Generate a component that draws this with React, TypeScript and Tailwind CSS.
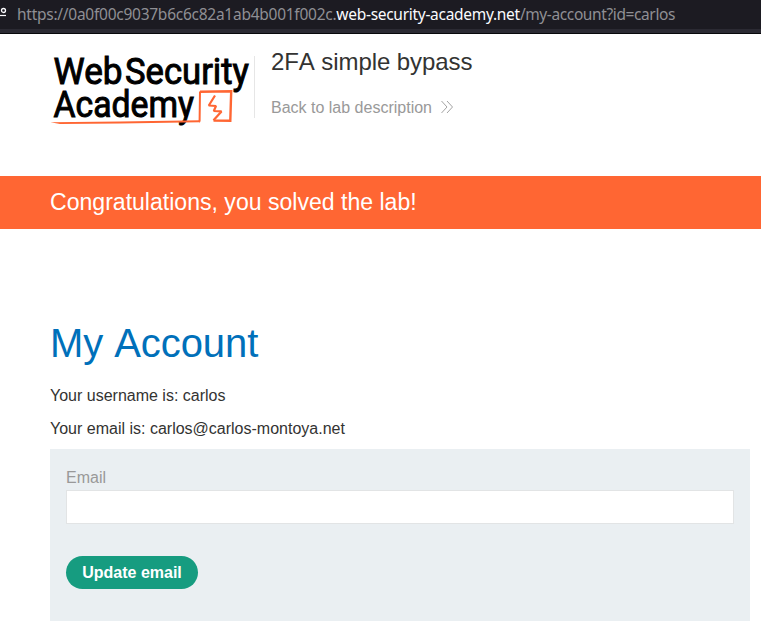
import React from "react";

function AddressBar() {
  return (
    <div className="flex h-[34px] flex-col bg-[#1c1b22]">
      <div className="flex h-[29px] items-start overflow-hidden">
        <svg className="h-[29px] w-[17px] shrink-0" viewBox="0 0 17 29" fill="none" stroke="#fbfbfe">
          <circle cx="3.5" cy="10.5" r="2" strokeWidth="1.3" />
          <path d="M0 15.5H6" strokeWidth="1.2" />
        </svg>
        <span className="whitespace-pre font-['Noto_Sans',sans-serif] text-[15.5px] leading-[28px] tracking-[-0.26px] text-[#8f8f94]">
          https://0a0f00c9037b6c6c82a1ab4b001f002c.<span className="tracking-[-0.29px] text-[#fbfbfe]">web-security-academy.net</span><span className="tracking-[-0.39px]">/my-account?id=carlos</span>
        </span>
      </div>
      <div className="h-1 bg-[#2b2a33]" />
      <div className="h-px bg-[#08080b]" />
    </div>
  );
}

function Logo() {
  return (
    <svg className="h-[80px] w-[204px] shrink-0 overflow-visible" viewBox="50 50 204 80" fill="none" role="img" aria-label="Web Security Academy">
      <g fill="#000" stroke="#000" strokeWidth="1" fontFamily="Roboto, sans-serif" fontWeight="400" fontSize="37.5">
        <text x="53.5" y="84.2" textLength="69" lengthAdjust="spacingAndGlyphs">Web</text>
        <text x="125" y="84.2" textLength="124" lengthAdjust="spacingAndGlyphs">Security</text>
        <text x="53.5" y="117" textLength="140.5" lengthAdjust="spacingAndGlyphs">Academy</text>
      </g>
      <path d="M200 91.8L231.2 91.2L230.3 120.7L213.5 120.6" stroke="#ff6633" strokeWidth="2.4" />
      <path d="M199 122L199.6 120.7L200 91.5" stroke="#ff6633" strokeWidth="2" />
      <path d="M50.5 122.3L120 121.4L200 120.2V122.3L120 123.4L60 124Z" fill="#ff6633" />
      <path d="M215 95.5L208.8 105.5L216 106L213.8 111L221.5 111.4L213.5 120.3" stroke="#ff6633" strokeWidth="2.2" strokeLinejoin="bevel" />
    </svg>
  );
}

export default function App() {
  return (
    <div className="h-[637px] w-full overflow-hidden bg-white font-['Liberation_Sans',Arial,sans-serif] text-base text-[#333332]">
      <AddressBar />
      <header className="flex h-[142px] items-start pl-[50px] pt-4">
        <Logo />
        <div className="mt-[6px] h-[62px] w-px bg-[#e6e6e6]" />
        <div className="-mt-1 pl-4">
          <h2 className="text-2xl leading-8 tracking-[-0.08px] [font-kerning:none]">2FA simple bypass</h2>
          <a className="mt-[18px] flex h-6 items-center text-[#999]">
            Back to lab description
            <svg className="-mt-0.5 ml-[9px] h-3.5 w-3" viewBox="0 0 12 14" fill="none" stroke="#a3a3a3">
              <path d="M.5 1L6 7L.5 13M6 1L11.5 7L6 13" />
            </svg>
          </a>
        </div>
      </header>
      <section className="flex h-[53px] items-center bg-[#ff6633] pb-px pl-[50px] text-white">
        <p className="text-[23.07px] leading-8">Congratulations, you solved the lab!</p>
      </section>
      <main className="pl-[50px] pr-[11px] pt-[90px]">
        <h1 className="text-[40px] leading-[48px] tracking-[-0.08px] text-[#0070ba] [font-kerning:none]">My Account</h1>
        <p className="mt-[17px] leading-6">Your username is: carlos</p>
        <p className="mt-[9px] leading-6">Your email is: carlos@carlos-montoya.net</p>
        <form className="mt-2 h-[172px] bg-[#eaeff2] px-4 pt-[17px]">
          <label className="block h-6 leading-6 text-[#999]" htmlFor="email">Email</label>
          <input id="email" className="block h-[34px] w-full border border-[#e2e4e5] bg-white px-2 outline-none" />
          <button type="button" className="mt-8 h-[33px] w-[132px] rounded-full bg-[#169c80] font-bold text-white">Update email</button>
        </form>
      </main>
    </div>
  );
}
